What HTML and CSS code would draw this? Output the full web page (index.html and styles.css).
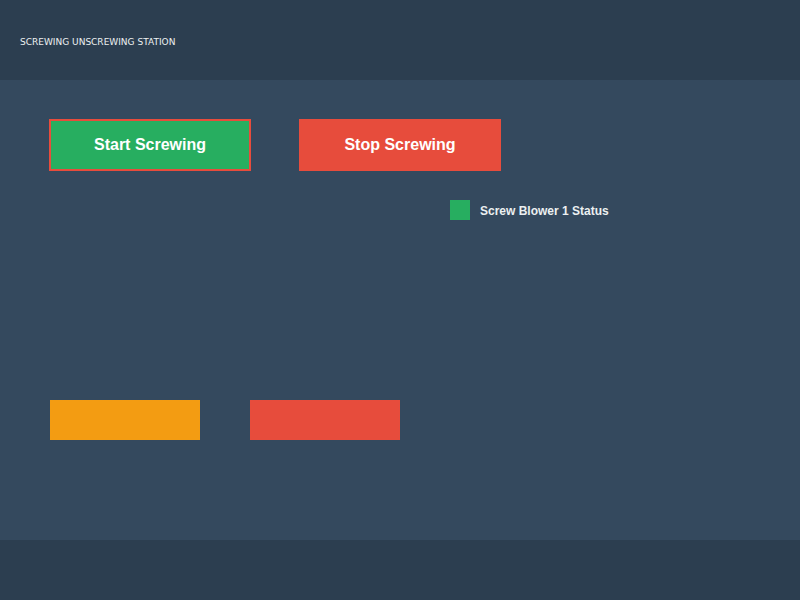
FILE: index.html
```html
<!DOCTYPE html>
<html>
<head>
<meta charset="utf-8">
<link rel="stylesheet" href="styles.css">
</head>
<body>
<header class="header"><span class="title">SCREWING UNSCREWING STATION</span></header>
<main class="main">
  <div class="btn-row">
    <button class="btn btn-start">Start Screwing</button>
    <button class="btn btn-stop">Stop Screwing</button>
  </div>
  <div class="status-row">
    <span class="status-dot"></span>
    <span class="status-label">Screw Blower 1 Status</span>
  </div>
  <div class="bar-row">
    <div class="bar bar-orange"></div>
    <div class="bar bar-red"></div>
  </div>
</main>
<footer class="footer"></footer>
</body>
</html>
```
FILE: styles.css
```css
html, body { margin: 0; padding: 0; }
body { width: 800px; height: 600px; background: #34495e; font-family: "Liberation Sans", Arial, sans-serif; }
.header { height: 80px; background: #2c3e50; display: flex; align-items: center; padding-left: 20px; box-sizing: border-box; }
.title { color: #ecf0f1; font-family: "DejaVu Sans", sans-serif; font-size: 9px; letter-spacing: 0; margin-top: 3px; }
.main { height: 460px; box-sizing: border-box; padding: 39px 0 0 49px; background: #34495e; }
.btn-row { display: flex; gap: 48px; }
.btn { width: 202px; height: 52px; box-sizing: border-box; border: 2px solid #e74c3c; color: #fff; font-family: "Liberation Sans", Arial, sans-serif; font-weight: bold; font-size: 16px; padding: 0; margin: 0; }
.btn-start { background: #27ae60; }
.btn-stop { background: #e74c3c; }
.status-row { display: flex; align-items: center; margin: 29px 0 0 401px; gap: 10px; height: 20px; }
.status-dot { width: 20px; height: 20px; background: #27ae60; }
.status-label { color: #ecf0f1; font-size: 12px; font-weight: bold; margin-top: 2px; }
.bar-row { display: flex; gap: 50px; margin: 180px 0 0 1px; }
.bar { width: 150px; height: 40px; }
.bar-orange { background: #f39c12; }
.bar-red { background: #e74c3c; }
.footer { height: 60px; background: #2c3e50; }
```
